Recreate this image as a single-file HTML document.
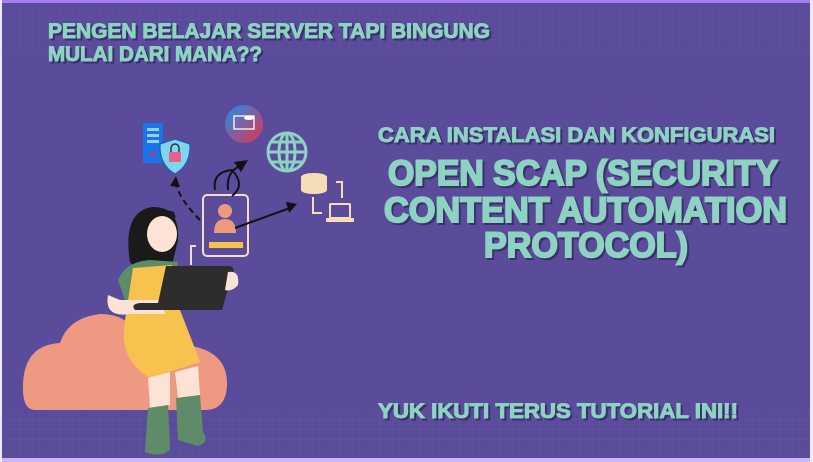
<!DOCTYPE html>
<html><head><meta charset="utf-8"><style>
html,body{margin:0;padding:0;}
body{width:813px;height:462px;overflow:hidden;background:#5a4c9a;}
svg{display:block}
text{font-family:"Liberation Sans",sans-serif;font-weight:700;}
</style></head><body>
<svg width="813" height="462" viewBox="0 0 813 462" xmlns="http://www.w3.org/2000/svg">
<defs>
<pattern id="g" width="10" height="10" patternUnits="userSpaceOnUse"><path d="M10 0V10M0 10H10" stroke="#6a5eaa" stroke-width="0.7" fill="none"/></pattern>
<linearGradient id="cg" x1="0" y1="0" x2="1" y2="1"><stop offset="0" stop-color="#1e8ff0"/><stop offset="1" stop-color="#e8304a"/></linearGradient>
</defs>
<rect width="813" height="462" fill="#5a4c9a"/>
<rect x="0" y="0" width="813" height="50" fill="url(#g)" opacity="0.6"/>
<rect x="0" y="410" width="813" height="50" fill="url(#g)" opacity="0.7"/>
<rect x="0" y="0" width="813" height="3" fill="#a67cf2"/>
<rect x="0" y="458" width="813" height="4" fill="#c9b8f5"/>
<rect x="0" y="0" width="2" height="462" fill="#efeaff"/>
<rect x="810" y="0" width="3" height="462" fill="#efeaff"/>

<g fill="#3b2f6e" stroke="#3b2f6e" transform="translate(2,2)">
<text x="48" y="38" font-size="21" stroke-width="1" textLength="442" lengthAdjust="spacingAndGlyphs">PENGEN BELAJAR SERVER TAPI BINGUNG</text>
<text x="48" y="61" font-size="21" stroke-width="1" textLength="214" lengthAdjust="spacingAndGlyphs">MULAI DARI MANA??</text>
<text x="378" y="142" font-size="21" stroke-width="1" textLength="397" lengthAdjust="spacingAndGlyphs">CARA INSTALASI DAN KONFIGURASI</text>
<text x="388" y="185" font-size="35" stroke-width="2" textLength="390" lengthAdjust="spacingAndGlyphs">OPEN SCAP (SECURITY</text>
<text x="384" y="222" font-size="35" stroke-width="2" textLength="403" lengthAdjust="spacingAndGlyphs">CONTENT AUTOMATION</text>
<text x="484" y="257" font-size="35" stroke-width="2" textLength="204" lengthAdjust="spacingAndGlyphs">PROTOCOL)</text>
<text x="378" y="418" font-size="21" stroke-width="1" textLength="360" lengthAdjust="spacingAndGlyphs">YUK IKUTI TERUS TUTORIAL INI!!</text>
</g>
<g fill="#8ed3c1" stroke="#8ed3c1">
<text x="48" y="38" font-size="21" stroke-width="1" textLength="442" lengthAdjust="spacingAndGlyphs">PENGEN BELAJAR SERVER TAPI BINGUNG</text>
<text x="48" y="61" font-size="21" stroke-width="1" textLength="214" lengthAdjust="spacingAndGlyphs">MULAI DARI MANA??</text>
<text x="378" y="142" font-size="21" stroke-width="1" textLength="397" lengthAdjust="spacingAndGlyphs">CARA INSTALASI DAN KONFIGURASI</text>
<text x="388" y="185" font-size="35" stroke-width="2" textLength="390" lengthAdjust="spacingAndGlyphs">OPEN SCAP (SECURITY</text>
<text x="384" y="222" font-size="35" stroke-width="2" textLength="403" lengthAdjust="spacingAndGlyphs">CONTENT AUTOMATION</text>
<text x="484" y="257" font-size="35" stroke-width="2" textLength="204" lengthAdjust="spacingAndGlyphs">PROTOCOL)</text>
<text x="378" y="418" font-size="21" stroke-width="1" textLength="360" lengthAdjust="spacingAndGlyphs">YUK IKUTI TERUS TUTORIAL INI!!</text>
</g>

<path d="M35 410 Q22 410 23 385 Q24 345 60 343 Q68 318 100 314 Q130 314 140 340 Q160 325 185 345 Q228 350 227 385 Q226 410 205 410 Z" fill="#ee9a82"/>

<rect x="143" y="123" width="20" height="40" rx="1" fill="#1a73e8"/>
<rect x="147" y="128" width="12" height="3" fill="#8fd0ff"/>
<rect x="147" y="134" width="12" height="3" fill="#8fd0ff"/>
<rect x="147" y="140" width="12" height="3" fill="#8fd0ff"/>
<circle cx="153" cy="154" r="2" fill="#e25"/>
<path d="M175 139 L190 144 Q191 165 175 174 Q159 165 160 144 Z" fill="#7fd4f0" stroke="#1a5fb0" stroke-width="1.2"/>
<rect x="169" y="152" width="12" height="10" rx="1" fill="#e9608a"/>
<path d="M171 152 v-4 a4 4 0 0 1 8 0 v4" stroke="#333" stroke-width="1.5" fill="none"/>
<circle cx="244" cy="124" r="19" fill="url(#cg)"/>
<rect x="234" y="116" width="20" height="13" fill="none" stroke="#fff" stroke-width="1.3"/>
<ellipse cx="249" cy="118" rx="5" ry="2" fill="#fff"/>
<g stroke="#8ed3c1" stroke-width="3" fill="none">
<circle cx="287" cy="152" r="19"/>
<ellipse cx="287" cy="152" rx="8" ry="19"/>
<path d="M268 152 H306 M272 142 H302 M272 162 H302 M287 133 V171"/>
</g>
<ellipse cx="314" cy="177" rx="13" ry="4" fill="#f7ddb6"/>
<rect x="301" y="177" width="26" height="13" fill="#f7ddb6"/>
<ellipse cx="314" cy="190" rx="13" ry="4" fill="#f7ddb6"/>
<path d="M342 198 V182 H336 M313 197 V213 H322" stroke="#f7ddb6" stroke-width="2" fill="none"/>
<rect x="330" y="204" width="20" height="14" rx="1" fill="none" stroke="#f7ddb6" stroke-width="2"/>
<rect x="326" y="218" width="28" height="4" rx="1" fill="#f7ddb6"/>
<rect x="203" y="195" width="45" height="61" rx="4" fill="none" stroke="#f5dcc8" stroke-width="2"/>
<circle cx="225" cy="211" r="7" fill="#ec9a7e"/>
<path d="M214 233 Q214 219 225 219 Q236 219 236 233 Z" fill="#ec9a7e"/>
<rect x="209" y="242" width="34" height="6" fill="#f5c34d"/>
<path d="M196 246 H191 V265" stroke="#f5dcc8" stroke-width="2" fill="none"/>
<path d="M200 220 Q180 200 175 182" stroke="#111" stroke-width="2" stroke-dasharray="6 4" fill="none"/>
<path d="M170 186 L176 176 L180 187" fill="#111"/>
<path d="M235 228 L290 208" stroke="#111" stroke-width="2"/>
<path d="M286 202 L297 204 L289 213 Z" fill="#111"/>
<path d="M228 190 Q226 172 240 166 M215 190 Q212 172 232 170 Q246 185 232 196" stroke="#111" stroke-width="2" fill="none"/>
<path d="M234 162 L248 160 L241 172 Z" fill="#111"/>
<path d="M130 262 Q122 212 152 207 Q180 206 178 240 L172 265 L140 275 Z" fill="#1a1a1a"/>
<ellipse cx="162" cy="234" rx="15" ry="18" fill="#fce3d5"/>
<path d="M145 226 Q150 208 176 218 L174 212 Q150 204 144 222 Z" fill="#1a1a1a"/>
<path d="M118 280 Q125 262 150 260 L178 262 L172 300 L125 300 Z" fill="#5f8c68"/>
<path d="M133 268 L125 320 Q118 360 150 378 L200 362 Q188 330 176 300 L172 265 Z" fill="#f8c24e"/>
<path d="M108 295 Q104 318 130 314 L165 314 L162 300 L120 300 Z" fill="#fce3d5"/>
<path d="M148 378 L170 372 L170 405 L150 408 Z" fill="#fce3d5"/>
<path d="M175 372 L198 366 L200 395 L178 398 Z" fill="#fce3d5"/>
<path d="M148 408 L168 405 L170 450 Q160 458 145 452 Z" fill="#5f8c68"/>
<path d="M176 398 L200 395 L203 432 Q210 442 198 446 L178 440 Z" fill="#5f8c68"/>
<path d="M166 266 L230 266 Q236 268 232 276 L222 310 L135 310 Q130 304 140 303 L158 303 Z" fill="#2d2d2d"/>
<path d="M228 272 Q240 270 238 285 Q232 292 225 290 Z" fill="#fce3d5"/>
</svg>
</body></html>
